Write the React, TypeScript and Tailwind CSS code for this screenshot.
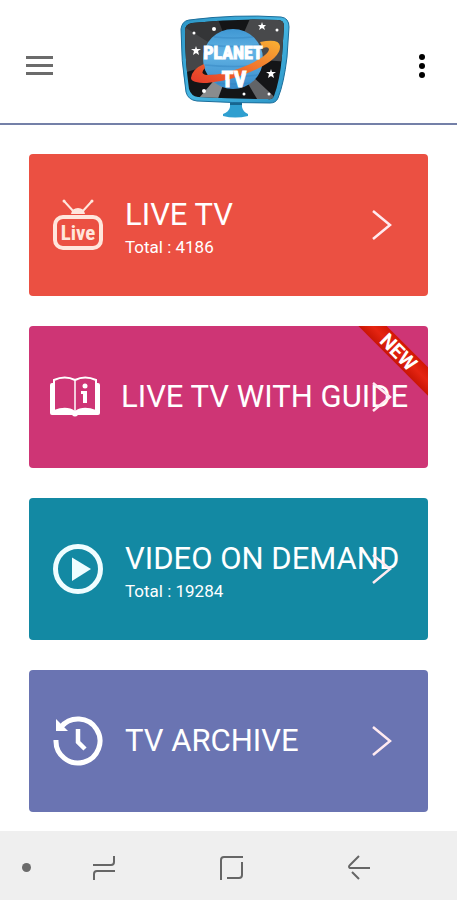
import type { ReactNode } from "react";

function PlanetLogo() {
  return (
    <svg viewBox="0 0 110 104" className="h-[104px] w-[110px]" role="img" aria-label="Planet TV">
      <defs>
        <linearGradient id="frame" x1="0" y1="0" x2="1" y2="1">
          <stop offset="0" stopColor="#2b95c6" />
          <stop offset="0.5" stopColor="#46b6e2" />
          <stop offset="1" stopColor="#2b93c4" />
        </linearGradient>
        <linearGradient id="ring" x1="0" y1="1" x2="1" y2="0">
          <stop offset="0" stopColor="#e5392a" />
          <stop offset="0.45" stopColor="#ee6a2b" />
          <stop offset="1" stopColor="#f8b233" />
        </linearGradient>
        <linearGradient id="globe" x1="0" y1="0" x2="0" y2="1">
          <stop offset="0" stopColor="#3f97d3" />
          <stop offset="0.4" stopColor="#62b3e4" />
          <stop offset="1" stopColor="#3689c8" />
        </linearGradient>
        <clipPath id="screen">
          <path d="M12 9 Q55 4 98 6 Q104 6 104 12 L102 42 Q100 66 94 82 Q92 86 88 85 Q52 85 18 83 Q11 82 9 75 Q5 46 5 17 Q5 10 12 9Z" />
        </clipPath>
      </defs>
      <path d="M50 84 H62 V93 Q63 98 68 100 V102 Q55 105 43 102 V100 Q49 98 50 93Z" fill="#2f9fd0" />
      <path d="M50 86 H62 V91 H50Z" fill="#17668f" />
      <path
        d="M9 6 Q55 0 101 3 Q109 4 109 13 L107 43 Q104 69 98 84 Q96 89 90 89 Q52 89 17 87 Q8 86 6 78 Q1 47 1 15 Q2 7 9 6Z"
        fill="url(#frame)"
        stroke="#1c6e9b"
        strokeWidth="1"
      />
      <g clipPath="url(#screen)">
        <rect width="110" height="90" fill="#141517" />
        <path d="M53 44 L0 14 V0 H36Z" fill="#343537" />
        <path d="M53 44 L72 0 H110 V48Z" fill="#48494b" />
        <path d="M53 44 L0 60 V10Z" fill="#454648" />
        <path d="M53 44 L14 90 H36Z" fill="#8a8c8e" />
        <path d="M53 44 L80 90 H102Z" fill="#626467" />
      </g>
      <circle cx="53" cy="45" r="30" fill="url(#globe)" />
      <g stroke="#2f80bd" strokeWidth="1.5" fill="none" opacity="0.4">
        <path d="M34 23 Q54 25 73 23" />
        <path d="M28 31 Q54 34 79 31" />
        <path d="M25 51 Q54 54 82 51" />
        <path d="M29 61 Q54 64 78 61" />
        <path d="M37 69 Q54 71 70 69" />
      </g>
      <path
        d="M80 28 Q99 24 100 32 Q101 43 77 55 Q52 67 27 69 Q11 69 11 64 Q12 55 24 50 L25 54 Q19 60 27 61 Q45 61 68 51 Q89 41 89 35 Q88 32 83 34Z"
        fill="url(#ring)"
      />
      <g fill="#fff">
        <path d="m16 32 1 3h4l-3 2 1 4-3-2-3 2 1-4-3-2h4z" />
        <path d="m82 8 1 3h3l-2 2 1 3-3-2-3 2 1-3-2-2h3z" />
        <path d="m91 55 1 3h4l-3 2 1 4-3-2-3 2 1-4-3-2h4z" />
        <circle cx="14" cy="19" r="1.5" />
        <circle cx="34" cy="15" r="2" />
        <circle cx="97" cy="16" r="1.5" />
        <circle cx="24" cy="77" r="2" />
        <circle cx="64" cy="80" r="1.5" />
        <circle cx="89" cy="80" r="1.5" />
      </g>
      <g
        fill="#fff"
        stroke="#fff"
        strokeWidth="1"
        textAnchor="middle"
        fontWeight="700"
        fontFamily="'Roboto Condensed', 'Liberation Sans Narrow', 'Liberation Sans', sans-serif"
      >
        <text x="53" y="45" fontSize="18">PLANET</text>
        <text x="54" y="73" fontSize="22">TV</text>
      </g>
    </svg>
  );
}

function LiveIcon() {
  return (
    <svg viewBox="0 0 50 52" className="h-[52px] w-[50px]" fill="none" aria-hidden="true">
      <path d="M11 2 21 13M39 2 29 13" stroke="#ffe6dc" strokeWidth="2" />
      <circle cx="11" cy="2" r="1.5" fill="#ffe6dc" />
      <circle cx="39" cy="2" r="1.5" fill="#ffe6dc" />
      <path d="M18 15 Q19 9 25 9 Q31 9 32 15Z" fill="#ffe6dc" />
      <rect x="2" y="18" width="46" height="31" rx="8" stroke="#ffe6dc" strokeWidth="4" />
      <text
        x="25"
        y="41"
        textAnchor="middle"
        fill="#ffe6dc"
        fontSize="21"
        fontWeight="700"
        fontFamily="'Roboto Condensed', 'Liberation Sans Narrow', 'Liberation Sans', sans-serif"
      >
        Live
      </text>
    </svg>
  );
}

function GuideIcon() {
  return (
    <svg viewBox="0 0 52 42" className="h-[42px] w-[52px]" fill="none" aria-hidden="true">
      <path
        d="M5 7 H3 Q1 7 1 9 V37 Q1 39 3 39 H23 Q26 42 29 39 H49 Q51 39 51 37 V9 Q51 7 49 7 H47 V34 Q34 29 26 35 Q18 29 5 34Z"
        fill="#fff"
      />
      <path d="M5 35 V4 Q16 -1 26 4 Q36 -1 47 4 V35" stroke="#fff" strokeWidth="2" />
      <path d="M26 5 V36" stroke="#fff" strokeWidth="1.5" />
      <circle cx="36" cy="10" r="2.5" fill="#fff" />
      <path d="M32 15 H38 V27 H34 V18 H32Z" fill="#fff" />
    </svg>
  );
}

function PlayIcon() {
  return (
    <svg viewBox="0 0 50 50" className="size-[50px]" aria-hidden="true">
      <circle cx="25" cy="25" r="22.5" fill="none" stroke="#effdff" strokeWidth="5" />
      <path d="M19 13.5 38 25 19 37Z" fill="#effdff" />
    </svg>
  );
}

function ArchiveIcon() {
  return (
    <svg viewBox="0 0 50 50" className="size-[50px]" fill="none" aria-hidden="true">
      <path d="M8 11 A22 22 0 1 1 3 24" stroke="#fff" strokeWidth="5" />
      <path d="M3 3 V15 H15Z" fill="#fff" />
      <path d="M25 13 V26 L32 33" stroke="#fff" strokeWidth="4.5" />
    </svg>
  );
}

function Chevron() {
  return (
    <svg viewBox="0 0 20 30" className="h-[30px] w-5 shrink-0" fill="none" aria-hidden="true">
      <path d="M1 1 18 15 1 29" stroke="#ffeaf0" strokeWidth="2.5" />
    </svg>
  );
}

type MenuCardProps = {
  title: string;
  total?: number;
  icon: ReactNode;
  color: string;
  isNew?: boolean;
};

function MenuCard({ title, total, icon, color, isNew }: MenuCardProps) {
  return (
    <button
      type="button"
      className={`relative flex h-[142px] w-full items-center gap-5 overflow-hidden rounded pr-9 text-left text-white ${isNew ? "pl-5" : "pl-6"} ${color}`}
    >
      <span className="w-[52px] shrink-0">{icon}</span>
      <span className="min-w-0 flex-1 whitespace-nowrap">
        <span className="block text-[31px] leading-11">{title}</span>
        {total !== undefined && <span className="block text-[17px] leading-5">Total : {total}</span>}
      </span>
      <Chevron />
      {isNew && (
        <span className="absolute top-4 -right-7 w-[115px] rotate-45 bg-linear-to-b from-[#d31605] via-[#e52411] to-[#c91505] text-center text-xl leading-5 font-bold">
          NEW
        </span>
      )}
    </button>
  );
}

export default function App() {
  return (
    <div className="flex min-h-screen flex-col bg-white font-['Roboto','Liberation_Sans',sans-serif]">
      <header className="flex h-[125px] items-center justify-between border-b-2 border-[#7480a8] px-[26px] pt-2">
        <button type="button" aria-label="Open menu" className="flex w-[50px] flex-col gap-[5px]">
          <span className="h-[3px] w-[27px] bg-[#6b6b6b]" />
          <span className="h-[3px] w-[27px] bg-[#6b6b6b]" />
          <span className="h-[3px] w-[27px] bg-[#6b6b6b]" />
        </button>
        <PlanetLogo />
        <button type="button" aria-label="More options" className="flex w-[38px] flex-col items-end gap-[3px] pr-1.5">
          <span className="size-1.5 rounded-full bg-black" />
          <span className="size-1.5 rounded-full bg-black" />
          <span className="size-1.5 rounded-full bg-black" />
        </button>
      </header>

      <main className="flex flex-1 flex-col gap-[30px] px-[29px] pt-[29px] pb-[19px]">
        <MenuCard title="LIVE TV" total={4186} icon={<LiveIcon />} color="bg-[#eb5042]" />
        <MenuCard title="LIVE TV WITH GUIDE" icon={<GuideIcon />} color="bg-[#ce3575]" isNew />
        <MenuCard title="VIDEO ON DEMAND" total={19284} icon={<PlayIcon />} color="bg-[#1389a3]" />
        <MenuCard title="TV ARCHIVE" icon={<ArchiveIcon />} color="bg-[#6a74b2]" />
      </main>

      <nav className="flex h-[69px] items-center bg-[#efefef] pt-1 text-[#666]">
        <span className="ml-[22px] size-[9px] rounded-full bg-[#6b6b6b]" />
        <div className="flex flex-1 justify-between pr-[85px] pl-[60px]">
          <button type="button" aria-label="Recent apps">
            <svg viewBox="0 0 26 26" className="size-[26px]" fill="none" stroke="currentColor" strokeWidth="2">
              <path d="M2 10 H20 Q23 10 23 7 V1M24 16 H6 Q3 16 3 19 V25" />
            </svg>
          </button>
          <button type="button" aria-label="Home">
            <svg viewBox="0 0 26 26" className="size-[26px]" fill="none" stroke="currentColor" strokeWidth="2">
              <path d="M2 25 V5 Q2 2 5 2 H24M23 7 V20 Q23 23 20 23 H8" />
            </svg>
          </button>
          <button type="button" aria-label="Back">
            <svg viewBox="0 0 26 26" className="size-[26px]" fill="none" stroke="currentColor" strokeWidth="2">
              <path d="M24 13 H4 Q2 12 4 10 L13 1M6 17 13 24" />
            </svg>
          </button>
        </div>
      </nav>
    </div>
  );
}
